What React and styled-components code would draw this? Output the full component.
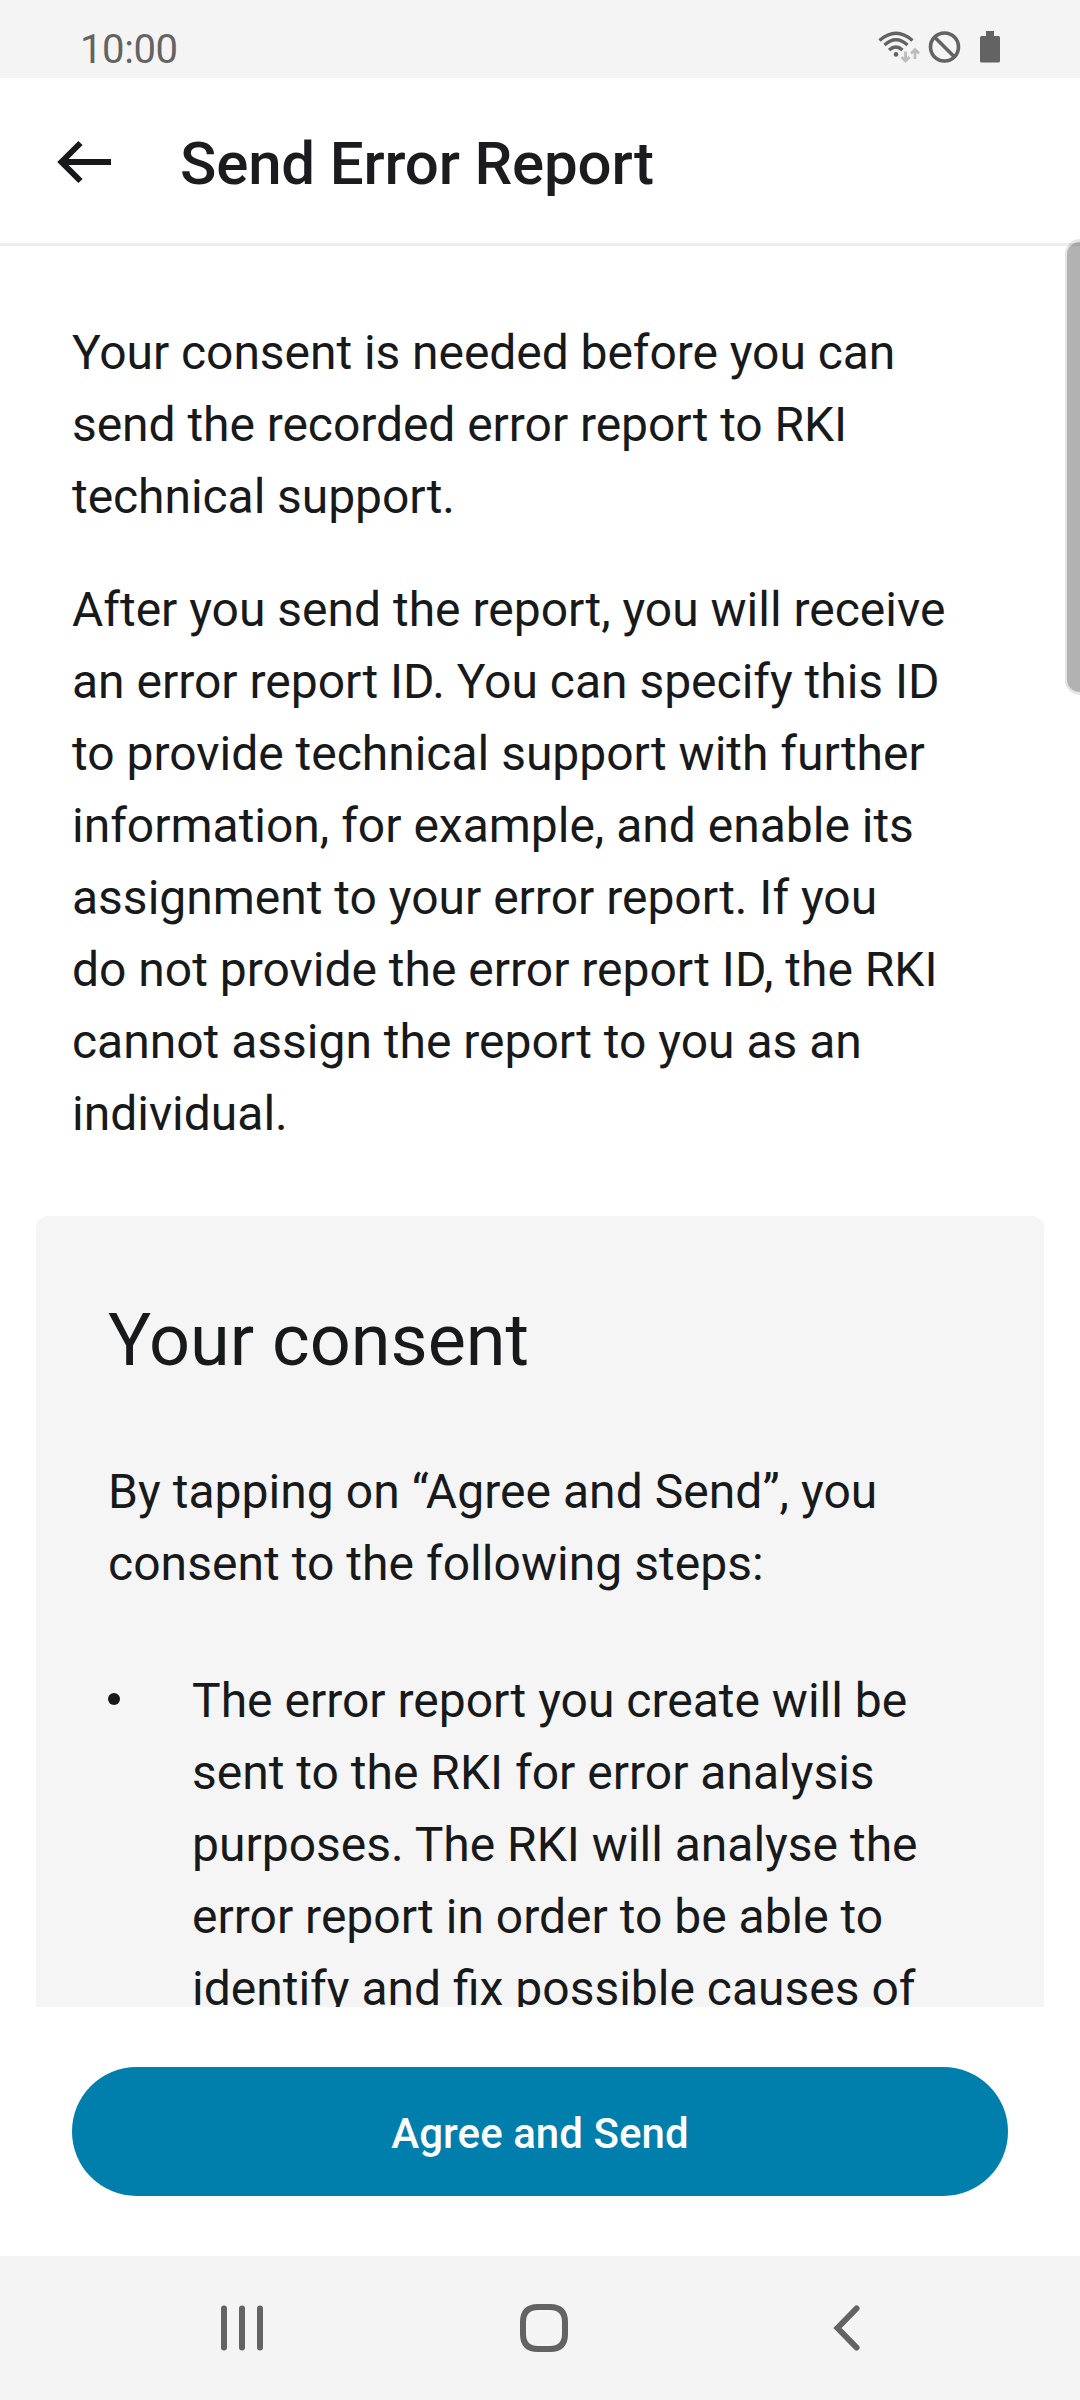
import React from "react";
import styled, { createGlobalStyle } from "styled-components";

const GlobalStyle = createGlobalStyle`
  * { box-sizing: border-box; }
  body { margin: 0; background: #ffffff; font-family: Roboto, "Noto Sans", sans-serif; color: #18191b; }
  h1, h2, p, ul { margin: 0; padding: 0; font-weight: 400; }
`;

const Screen = styled.div`
  width: 1080px;
  height: 2400px;
  display: flex;
  flex-direction: column;
  background: #ffffff;
  overflow: hidden;
`;

const StatusBar = styled.header`
  flex: none;
  height: 78px;
  padding: 16px 79px 0 80px;
  display: flex;
  justify-content: space-between;
  background: #f4f4f4;
  color: #636363;
`;

const Clock = styled.span`
  font-size: 40px;
  line-height: 67px;
  letter-spacing: -0.4px;
`;

const StatusIcons = styled.svg`
  width: 124px;
  height: 48px;
`;

const Toolbar = styled.div`
  flex: none;
  height: 168px;
  padding: 3px 56px 0;
  display: flex;
  align-items: center;
  gap: 69px;
  border-bottom: 3px solid #eeeeee;
`;

const BackButton = styled.button`
  width: 55px;
  height: 44px;
  padding: 0;
  border: 0;
  background: none;
  display: flex;
  color: #18191b;
`;

const Title = styled.h1`
  padding-top: 4px;
  font-size: 60px;
  line-height: 72px;
  font-weight: 500;
  letter-spacing: -0.17px;
  color: #1c1b1f;
`;

const Main = styled.main`
  position: relative;
  flex: none;
`;

const Viewport = styled.div`
  height: 1761px;
  overflow: hidden;
`;

const Content = styled.div`
  padding: 71px 36px 0;
  display: flex;
  flex-direction: column;
`;

const Intro = styled.div`
  padding: 0 36px;
  display: flex;
  flex-direction: column;
  gap: 41px;
`;

const Text = styled.p`
  font-size: 48px;
  line-height: 72px;
  letter-spacing: ${(p) => p.$spacing || "0"};
  white-space: nowrap;
`;

const Card = styled.section`
  margin-top: 66px;
  height: 1200px;
  padding: 77px 72px;
  border-radius: 12px;
  background: #f5f5f5;
`;

const CardTitle = styled.h2`
  font-size: 72px;
  line-height: 96px;
  margin-bottom: 67px;
  white-space: nowrap;
`;

const Steps = styled.ul`
  margin-top: 65px;
  list-style: none;
`;

const Step = styled.li`
  display: flex;
  gap: 72px;
`;

const Bullet = styled.span`
  flex: none;
  width: 12px;
  height: 12px;
  margin-top: 28px;
  border-radius: 50%;
  background: currentColor;
`;

const ScrollThumb = styled.div`
  position: absolute;
  top: -7px;
  right: 0;
  width: 15px;
  height: 456px;
  border: 2px solid rgba(0, 0, 0, 0.1);
  border-width: 3px 0 3px 2px;
  border-radius: 15px 0 0 15px;
  background: rgba(0, 0, 0, 0.3);
  background-clip: padding-box;
`;

const Footer = styled.footer`
  flex: none;
  height: 249px;
  padding: 60px 72px;
`;

const PrimaryButton = styled.button`
  width: 100%;
  height: 129px;
  padding: 5px 0 0;
  border: 0;
  border-radius: 65px;
  background: #007fad;
  color: #ffffff;
  font: 500 42px/64px Roboto, sans-serif;
  letter-spacing: 0.05px;
`;

const NavBar = styled.nav`
  flex: none;
  height: 144px;
  padding: 0 219px;
  display: flex;
  align-items: center;
  background: #f4f4f4;
`;

const NavIcon = styled.svg`
  width: ${(p) => p.$w}px;
  height: 48px;
  margin-left: ${(p) => p.$gap || 0}px;
  fill: none;
  stroke: #636363;
  stroke-width: 6;
  stroke-linecap: round;
`;

export default function App() {
  return (
    <>
      <GlobalStyle />
      <Screen>
        <StatusBar>
          <Clock>10:00</Clock>
          <StatusIcons viewBox="877 16 124 48" fill="none" stroke="#636363">
            <g strokeWidth="3.2">
              <path d="M879.5 40.5Q896 26 912.5 40.5" />
              <path d="M884.5 45Q896 34.500 907.500 45" />
              <path d="M889 50Q896 44 902.500 50" />
            </g>
            <circle cx="896" cy="54.400" r="2.300" fill="#636363" stroke="none" />
            <g stroke="#bdbdbd" strokeWidth="2.800">
              <path d="M905.500 51.500V61M901.500 57l4 4 4-4" />
              <path d="M915 59V50M911 53.500l4-4 4 4" />
            </g>
            <circle cx="944.500" cy="47" r="14" strokeWidth="3.600" />
            <path d="M935 37.500l19 19" strokeWidth="3.600" />
            <path d="M986 31h8v5h4.500q1.500 0 1.500 1.500v23.500q0 1.500-1.500 1.500h-17q-1.500 0-1.500-1.500v-23.500q0-1.500 1.500-1.500h4.500z" fill="#636363" stroke="none" />
          </StatusIcons>
        </StatusBar>
        <Toolbar>
          <BackButton aria-label="Back">
            <svg width="55" height="44" viewBox="0 0 55 44" fill="none" stroke="currentColor" strokeWidth="6">
              <path d="M55 22H5M24.500 3L5.500 22l19 19" />
            </svg>
          </BackButton>
          <Title>Send Error Report</Title>
        </Toolbar>
        <Main>
          <Viewport>
            <Content>
              <Intro>
                <Text $spacing="-0.06px">
                  Your consent is needed before you can<br />
                  send the recorded error report to RKI<br />
                  technical support.
                </Text>
                <Text $spacing="-0.01px">
                  After you send the report, you will receive<br />
                  an error report ID. You can specify this ID<br />
                  to provide technical support with further<br />
                  information, for example, and enable its<br />
                  assignment to your error report. If you<br />
                  do not provide the error report ID, the RKI<br />
                  cannot assign the report to you as an<br />
                  individual.
                </Text>
              </Intro>
              <Card>
                <CardTitle>Your consent</CardTitle>
                <Text $spacing="0.04px">
                  By tapping on “Agree and Send”, you<br />
                  consent to the following steps:
                </Text>
                <Steps>
                  <Step>
                    <Bullet />
                    <Text>
                      The error report you create will be<br />
                      sent to the RKI for error analysis<br />
                      purposes. The RKI will analyse the<br />
                      error report in order to be able to<br />
                      identify and fix possible causes of
                    </Text>
                  </Step>
                </Steps>
              </Card>
            </Content>
          </Viewport>
          <ScrollThumb />
        </Main>
        <Footer>
          <PrimaryButton>Agree and Send</PrimaryButton>
        </Footer>
        <NavBar>
          <NavIcon $w={46} viewBox="0 0 46 48">
            <path d="M5 4.500v39M23 4.500v39M41 4.500v39" />
          </NavIcon>
          <NavIcon $w={48} $gap={255} viewBox="0 0 48 48">
            <path d="M18 3h12q15 0 15 15v12q0 15-15 15h-12q-15 0-15-15v-12q0-15 15-15z" />
          </NavIcon>
          <NavIcon $w={28} $gap={265} viewBox="0 0 28 48">
            <path d="M23.500 4.500L4.500 24L23.500 43.500" />
          </NavIcon>
        </NavBar>
      </Screen>
    </>
  );
}
